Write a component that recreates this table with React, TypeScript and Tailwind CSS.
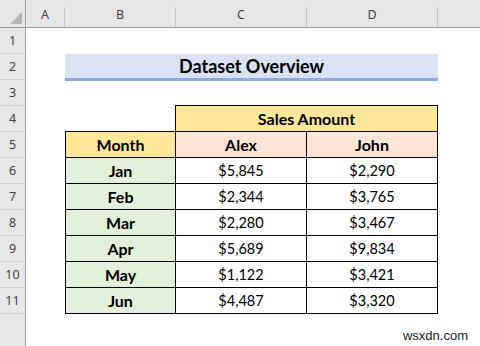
import React from "react";

const rows = [
  { m: "Jan", a: "$5,845", j: "$2,290" },
  { m: "Feb", a: "$2,344", j: "$3,765" },
  { m: "Mar", a: "$2,280", j: "$3,467" },
  { m: "Apr", a: "$5,689", j: "$9,834" },
  { m: "May", a: "$1,122", j: "$3,421" },
  { m: "Jun", a: "$4,487", j: "$3,320" },
];
const dataRowStart = ["row-start-7", "row-start-8", "row-start-9", "row-start-10", "row-start-11", "row-start-12"];
const numRowStart = ["row-start-2", "row-start-3", "row-start-4", "row-start-5", "row-start-6", "row-start-7", "row-start-8", "row-start-9", "row-start-10", "row-start-11", "row-start-12"];
const colHdrStart = ["col-start-2", "col-start-3", "col-start-4", "col-start-5", "col-start-6"];
const letters = ["A", "B", "C", "D", ""];

const body = "font-['Lato',sans-serif] text-black";
const hdrFont = "font-['Noto_Sans',sans-serif] text-[12.5px] text-[#444]";

export default function App() {
  return (
    <div className="w-[480px] h-[346px] bg-white overflow-hidden grid grid-cols-[26px_39px_111px_131px_131px_1fr] grid-rows-[28px_repeat(11,26px)_1fr]">
      {/* corner */}
      <div className="row-start-1 col-start-1 bg-[#e6e6e6] border-r border-b border-[#9f9f9f] flex items-end justify-end pr-[3px] pb-[3px]">
        <svg width="12" height="12" viewBox="0 0 12 12">
          <polygon points="12,0 12,12 0,12" fill="#b6b6b6" />
        </svg>
      </div>
      {/* column headers */}
      {letters.map((l, i) => (
        <div key={i} className={`row-start-1 ${colHdrStart[i]} bg-[#e6e6e6] border-b border-[#9f9f9f] flex`}>
          <div className={`flex-1 flex items-center justify-center pt-[3px] ${hdrFont}`}>{l}</div>
          {i < 4 && <div className="w-px h-[20px] self-end bg-[#c4c4c4]" />}
        </div>
      ))}
      {/* row headers */}
      {numRowStart.map((r, i) => (
        <div key={r} className={`${r} col-start-1 bg-[#e6e6e6] border-r border-r-[#9f9f9f] border-b border-b-[#cdcdcd] flex items-center justify-center pt-[2px] ${hdrFont}`}>
          {i + 1}
        </div>
      ))}
      <div className="row-start-13 col-start-1 bg-[#e6e6e6] border-r border-[#9f9f9f]" />

      {/* title */}
      <div className={`row-start-3 col-start-3 col-span-3 bg-[#d9e1f2] border-b-[3px] border-[#8ea9db] -mb-px flex items-center justify-center text-[18px] font-bold ${body}`}>
        Dataset Overview
      </div>

      {/* Sales Amount */}
      <div className={`row-start-5 col-start-4 col-span-2 -mt-px -ml-px bg-[#ffe699] border border-black flex items-center justify-center text-[16px] font-bold ${body}`}>
        Sales Amount
      </div>
      {/* header row */}
      <div className={`row-start-6 col-start-3 -mt-px bg-[#ffe699] border border-black flex items-center justify-center text-[16px] font-bold ${body}`}>
        Month
      </div>
      <div className={`row-start-6 col-start-4 bg-[#fce4d6] border-r border-b border-black flex items-center justify-center text-[16px] font-bold ${body}`}>
        Alex
      </div>
      <div className={`row-start-6 col-start-5 bg-[#fce4d6] border-r border-b border-black flex items-center justify-center text-[16px] font-bold ${body}`}>
        John
      </div>

      {rows.map((r, i) => (
        <React.Fragment key={r.m}>
          <div className={`${dataRowStart[i]} col-start-3 bg-[#e2efda] border-l border-r border-b border-black flex items-center justify-center text-[16px] font-bold ${body}`}>
            {r.m}
          </div>
          <div className={`${dataRowStart[i]} col-start-4 bg-white border-r border-b border-black flex items-center justify-center text-[14.5px] ${body}`}>
            {r.a}
          </div>
          <div className={`${dataRowStart[i]} col-start-5 bg-white border-r border-b border-black flex items-center justify-center text-[14.5px] ${body}`}>
            {r.j}
          </div>
        </React.Fragment>
      ))}

      {/* watermark */}
      <div className="row-start-13 col-start-4 col-span-3 flex justify-end items-start pt-[14px] pr-[12px] font-['Liberation_Sans',Arial,sans-serif] text-[13px] leading-[15px] text-[#222]">
        wsxdn.com
      </div>
    </div>
  );
}
